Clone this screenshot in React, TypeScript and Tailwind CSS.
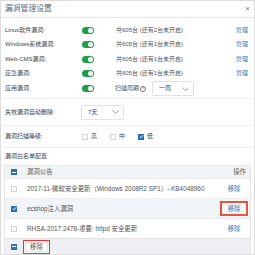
import React from "react";

const rows = [
    {label: "Linux软件漏洞:", count: "共605台 (还有2台未开启)"},
    {label: "Windows系统漏洞:", count: "共605台 (还有1台未开启)"},
    {label: "Web-CMS漏洞:", count: "共605台 (还有1台未开启)"},
    {label: "应急漏洞:", count: "共605台 (还有1台未开启)"},
];

const items = [
    {text: "2017-11-微软安全更新（Windows 2008R2 SP1）- KB4048960", checked: false},
    {text: "ecshop注入漏洞", checked: true},
    {text: "RHSA-2017:2478-重要: httpd 安全更新", checked: false},
];

function Toggle() {
    return (
        <div className="w-[12px] h-[7px] rounded-full bg-[#1e9e4a] flex items-center justify-end px-[1px]">
            <div className="w-[5px] h-[5px] rounded-full bg-white" />
        </div>
    );
}

function Check({state}: {state: "off" | "on" | "half"}) {
    if (state === "off") {
        return <div className="w-[6px] h-[6px] shrink-0 border border-[#d4d4d4] bg-white" />;
    }
    return (
        <div className="w-[6px] h-[6px] shrink-0 bg-[#2a6fc4] flex items-center justify-center">
            {state === "on" ? (
                <svg width="5" height="5" viewBox="0 0 10 10">
                    <path d="M1.5 5.2 L4 7.6 L8.6 2.4" stroke="white" strokeWidth="1.8" fill="none" />
                </svg>
            ) : (
                <div className="w-[4px] h-[1px] bg-white" />
            )}
        </div>
    );
}

function Select({value, width}: {value: string; width: string}) {
    return (
        <div className={`${width} h-[15px] border border-[#e2e2e2] rounded-[1px] flex items-center justify-between pl-[6px] pr-[4px] bg-white`}>
            <span>{value}</span>
            <svg width="7" height="4" viewBox="0 0 14 8">
                <path d="M1 1 L7 7 L13 1" stroke="#888" strokeWidth="1.4" fill="none" />
            </svg>
        </div>
    );
}

export default function App() {
    return (
        <div
            className="w-[255px] h-[255px] bg-white border border-[#dcdcdc] text-[6px] text-[#444] flex flex-col overflow-hidden"
            style={{fontFamily: '"Liberation Sans", "Noto Sans CJK SC", sans-serif'}}
        >
            <div className="h-[17px] shrink-0 border-b border-[#e6e6e6] flex items-center justify-between pl-[4px] pr-[4px]">
                <span className="text-[7.8px] text-[#666]">漏洞管理设置</span>
                <span className="text-[8px] text-[#777] leading-none">×</span>
            </div>

            <div className="flex flex-col pl-[4px] pr-[4px] pt-[5px]">
                {rows.map((r) => (
                    <div key={r.label} className="h-[14.5px] flex items-center">
                        <span className="w-[77px]">{r.label}</span>
                        <Toggle />
                        <span className="ml-[22px] text-[#555]">{r.count}</span>
                        <span className="ml-auto mr-[2px] text-[#2f7fc7]">管理</span>
                    </div>
                ))}
                <div className="h-[15px] flex items-center">
                    <span className="w-[77px]">应用漏洞</span>
                    <Toggle />
                    <span className="ml-[21px] text-[#555] flex items-center gap-[1px]">
                        扫描周期
                        <span className="w-[6px] h-[6px] rounded-full border border-[#777] text-[4px] flex items-center justify-center leading-none">?</span>
                    </span>
                    <div className="ml-[6px]">
                        <Select value="一周" width="w-[42px]" />
                    </div>
                </div>
            </div>

            <div className="mt-[2px] border-t border-[#ececec] mx-[2px]" />
            <div className="h-[26px] flex items-center pl-[4px]">
                <span className="w-[76px]">失效漏洞自动删除:</span>
                <Select value="7天" width="w-[43px]" />
            </div>
            <div className="border-t border-[#ececec] mx-[2px]" />
            <div className="h-[21px] flex items-center pl-[4px]">
                <span className="w-[77px]">漏洞扫描等级:</span>
                <div className="flex items-center gap-[3px]">
                    <Check state="off" />
                    <span>高</span>
                </div>
                <div className="flex items-center gap-[3px] ml-[13px]">
                    <Check state="off" />
                    <span>中</span>
                </div>
                <div className="flex items-center gap-[3px] ml-[13px]">
                    <Check state="on" />
                    <span>低</span>
                </div>
            </div>
            <div className="border-t border-[#ececec] mx-[2px]" />

            <div className="h-[17px] flex items-center pl-[4px]">漏洞白名单配置:</div>

            <div className="mx-[3px] border border-[#e8e8e8] border-b-0 flex flex-col flex-1 text-[6.4px]">
                <div className="h-[12px] bg-[#f2f3f5] flex items-center pl-[6px] pr-[4px]">
                    <Check state="half" />
                    <span className="ml-[10px] text-[#666]">漏洞公告</span>
                    <span className="ml-auto text-[#666]">操作</span>
                </div>
                {items.map((it) => (
                    <div
                        key={it.text}
                        className={`h-[20px] flex items-center pl-[6px] pr-[2px] border-t border-[#eeeeee] ${it.checked ? "bg-[#f1f5fa]" : "bg-white"}`}
                    >
                        <Check state={it.checked ? "on" : "off"} />
                        <span className="ml-[10px] text-[#555] whitespace-nowrap">{it.text}</span>
                        <div className="ml-auto">
                            {it.checked ? (
                                <div className="border-2 border-[#e8553f] bg-[#f6f8fb] h-[15px] px-[5.5px] flex items-center">
                                    <span className="text-[#2f7fc7]">移除</span>
                                </div>
                            ) : (
                                <div className="h-[15px] px-[7.5px] flex items-center">
                                    <span className="text-[#2f7fc7]">移除</span>
                                </div>
                            )}
                        </div>
                    </div>
                ))}
                <div className="flex-1 bg-[#eef0f3] border-t border-[#e4e4e4] flex items-center pl-[6px]">
                    <Check state="half" />
                    <div className="ml-[6px] border-[1.5px] border-red-500 p-[1px] bg-white">
                        <div className="h-[10px] px-[4px] bg-white border border-[#e0e0e0] flex items-center text-[#555]">移除</div>
                    </div>
                </div>
            </div>
        </div>
    );
}
